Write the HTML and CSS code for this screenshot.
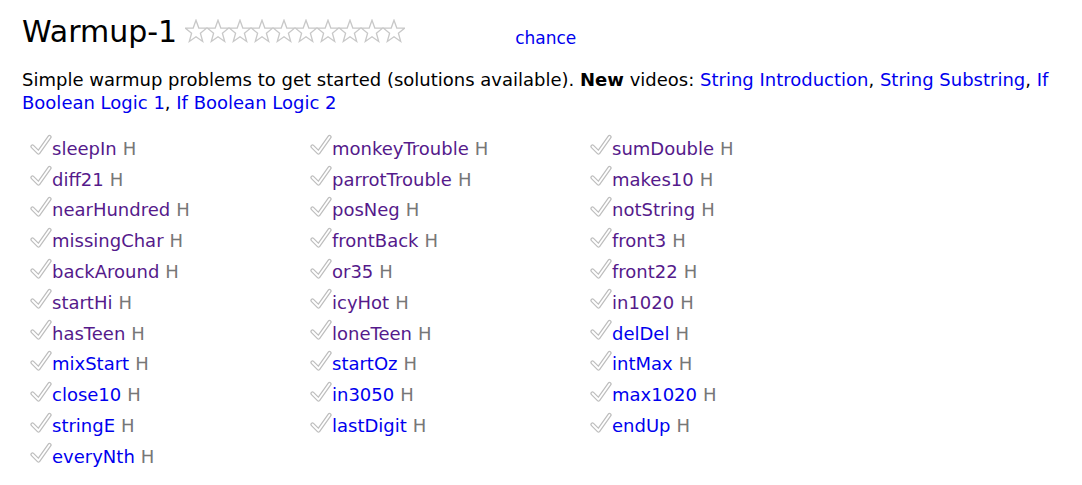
FILE: index.html
```html
<!DOCTYPE html>
<html>
<head>
<meta charset="utf-8">
<link rel="stylesheet" href="styles.css">
</head>
<body>
<div class="page">
  <div class="title-row">
    <h1 class="title">Warmup-1</h1>
    <span class="stars">
      <svg viewBox="0 0 220 26" width="220" height="26">
        <defs>
          <path id="st" d="M11 1.2 L13.8 9 L21.5 9.2 L15.4 14.2 L17.7 22.5 L11 17.8 L4.3 22.5 L6.6 14.2 L0.5 9.2 L8.2 9 Z" fill="#fff" stroke="#c8c8c8" stroke-width="1.3" stroke-linejoin="miter"/>
        </defs>
        <use href="#st" x="0"/><use href="#st" x="22"/><use href="#st" x="44"/><use href="#st" x="66"/><use href="#st" x="88"/>
        <use href="#st" x="110"/><use href="#st" x="132"/><use href="#st" x="154"/><use href="#st" x="176"/><use href="#st" x="198"/>
      </svg>
    </span>
    <a class="chance" href="#">chance</a>
  </div>
  <p class="desc">Simple warmup problems to get started (solutions available). <b>New</b> videos: <a href="#">String Introduction</a>, <a href="#">String Substring</a>, <a href="#">If Boolean Logic 1</a>, <a href="#">If Boolean Logic 2</a></p>
  <div class="grid">
    <div class="col">
      <div class="item"><svg class="chk"><use href="#ck"/></svg><a class="v" href="#">sleepIn</a><span class="h">H</span></div>
      <div class="item"><svg class="chk"><use href="#ck"/></svg><a class="v" href="#">diff21</a><span class="h">H</span></div>
      <div class="item"><svg class="chk"><use href="#ck"/></svg><a class="v" href="#">nearHundred</a><span class="h">H</span></div>
      <div class="item"><svg class="chk"><use href="#ck"/></svg><a class="v" href="#">missingChar</a><span class="h">H</span></div>
      <div class="item"><svg class="chk"><use href="#ck"/></svg><a class="v" href="#">backAround</a><span class="h">H</span></div>
      <div class="item"><svg class="chk"><use href="#ck"/></svg><a class="v" href="#">startHi</a><span class="h">H</span></div>
      <div class="item"><svg class="chk"><use href="#ck"/></svg><a class="v" href="#">hasTeen</a><span class="h">H</span></div>
      <div class="item"><svg class="chk"><use href="#ck"/></svg><a class="n" href="#">mixStart</a><span class="h">H</span></div>
      <div class="item"><svg class="chk"><use href="#ck"/></svg><a class="n" href="#">close10</a><span class="h">H</span></div>
      <div class="item"><svg class="chk"><use href="#ck"/></svg><a class="n" href="#">stringE</a><span class="h">H</span></div>
      <div class="item"><svg class="chk"><use href="#ck"/></svg><a class="n" href="#">everyNth</a><span class="h">H</span></div>
    </div>
    <div class="col">
      <div class="item"><svg class="chk"><use href="#ck"/></svg><a class="v" href="#">monkeyTrouble</a><span class="h">H</span></div>
      <div class="item"><svg class="chk"><use href="#ck"/></svg><a class="v" href="#">parrotTrouble</a><span class="h">H</span></div>
      <div class="item"><svg class="chk"><use href="#ck"/></svg><a class="v" href="#">posNeg</a><span class="h">H</span></div>
      <div class="item"><svg class="chk"><use href="#ck"/></svg><a class="v" href="#">frontBack</a><span class="h">H</span></div>
      <div class="item"><svg class="chk"><use href="#ck"/></svg><a class="v" href="#">or35</a><span class="h">H</span></div>
      <div class="item"><svg class="chk"><use href="#ck"/></svg><a class="v" href="#">icyHot</a><span class="h">H</span></div>
      <div class="item"><svg class="chk"><use href="#ck"/></svg><a class="v" href="#">loneTeen</a><span class="h">H</span></div>
      <div class="item"><svg class="chk"><use href="#ck"/></svg><a class="n" href="#">startOz</a><span class="h">H</span></div>
      <div class="item"><svg class="chk"><use href="#ck"/></svg><a class="n" href="#">in3050</a><span class="h">H</span></div>
      <div class="item"><svg class="chk"><use href="#ck"/></svg><a class="n" href="#">lastDigit</a><span class="h">H</span></div>
    </div>
    <div class="col">
      <div class="item"><svg class="chk"><use href="#ck"/></svg><a class="v" href="#">sumDouble</a><span class="h">H</span></div>
      <div class="item"><svg class="chk"><use href="#ck"/></svg><a class="v" href="#">makes10</a><span class="h">H</span></div>
      <div class="item"><svg class="chk"><use href="#ck"/></svg><a class="v" href="#">notString</a><span class="h">H</span></div>
      <div class="item"><svg class="chk"><use href="#ck"/></svg><a class="v" href="#">front3</a><span class="h">H</span></div>
      <div class="item"><svg class="chk"><use href="#ck"/></svg><a class="v" href="#">front22</a><span class="h">H</span></div>
      <div class="item"><svg class="chk"><use href="#ck"/></svg><a class="v" href="#">in1020</a><span class="h">H</span></div>
      <div class="item"><svg class="chk"><use href="#ck"/></svg><a class="n" href="#">delDel</a><span class="h">H</span></div>
      <div class="item"><svg class="chk"><use href="#ck"/></svg><a class="n" href="#">intMax</a><span class="h">H</span></div>
      <div class="item"><svg class="chk"><use href="#ck"/></svg><a class="n" href="#">max1020</a><span class="h">H</span></div>
      <div class="item"><svg class="chk"><use href="#ck"/></svg><a class="n" href="#">endUp</a><span class="h">H</span></div>
    </div>
  </div>
</div>
<svg width="0" height="0" class="defs">
  <defs>
    <g id="ck">
      <path d="M2.5 12.5 L8.5 18.5 L19.5 3" fill="none" stroke="#bdbdbd" stroke-width="4.2" stroke-linecap="round" stroke-linejoin="round"/>
      <path d="M2.5 12.5 L8.5 18.5 L19.5 3" fill="none" stroke="#fff" stroke-width="1.8" stroke-linecap="round" stroke-linejoin="round"/>
    </g>
  </defs>
</svg>
</body>
</html>
```
FILE: styles.css
```css
html, body {
  margin: 0;
  padding: 0;
  background: #fff;
}
body {
  font-family: "DejaVu Sans", Verdana, sans-serif;
  color: #000;
}
.page {
  padding: 12px 14px 0 22px;
}
.title-row {
  display: flex;
  align-items: center;
  height: 40px;
}
.title {
  margin: 0;
  font-weight: normal;
  font-size: 30px;
  line-height: 40px;
}
.stars {
  display: flex;
  margin-left: 8px;
  margin-top: 0;
}
.stars svg {
  display: block;
}
.chance {
  margin-left: 110px;
  font-size: 17px;
  color: #0000ee;
  text-decoration: none;
  margin-top: 12px;
}
a {
  text-decoration: none;
}
.desc {
  margin: 16px 0 0 0;
  font-size: 18px;
  line-height: 23px;
}
.desc a {
  color: #0000ee;
}
.grid {
  display: grid;
  grid-template-columns: 280px 280px 280px;
  margin-top: 19px;
  padding-left: 8px;
}
.col {
  display: flex;
  flex-direction: column;
}
.item {
  height: 30.8px;
  display: flex;
  align-items: center;
  font-size: 18px;
  white-space: nowrap;
}
.chk {
  width: 22px;
  height: 22px;
  margin-top: -6px;
  flex: none;
}
.v {
  color: #551a8b;
}
.n {
  color: #0000ee;
}
.h {
  color: #777;
  margin-left: 6px;
}
.defs {
  position: absolute;
}
```
